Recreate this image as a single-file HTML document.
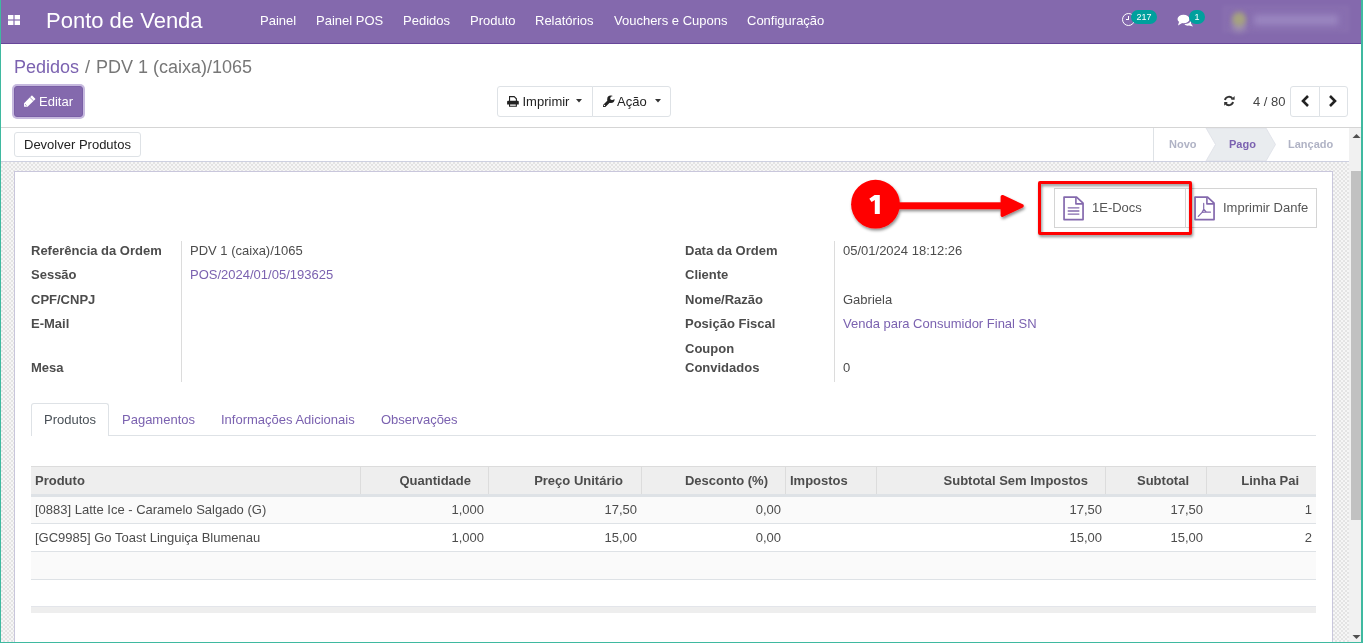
<!DOCTYPE html>
<html><head><meta charset="utf-8">
<style>
*{box-sizing:border-box;margin:0;padding:0}
html,body{width:1363px;height:643px;overflow:hidden;background:#fff}
body{-webkit-font-smoothing:antialiased}
#root{position:absolute;left:0;top:0;width:1363px;height:643px;will-change:transform}
body{font-family:"Liberation Sans",sans-serif;font-size:13px;color:#4c4c4c;position:relative;line-height:13px}
.a{position:absolute;white-space:nowrap}
#frameL{left:0;top:0;width:1px;height:643px;background:#3fb9a0}
#frameR{left:1361px;top:0;width:2px;height:643px;background:#3fb9a0}
#frameB{left:0;top:642px;width:1363px;height:1px;background:#3fb9a0}
#nav{left:1px;top:0;width:1360px;height:44px;background:#8469ad;border-bottom:1px solid #67469a}
.navt{color:#fff;font-size:13px;top:14px}
#brand{left:46px;top:8px;font-size:22px;color:#fff;line-height:25px}
.badge{position:absolute;background:#00a09d;color:#fff;font-size:9px;border-radius:7px;height:14px;line-height:14px;text-align:center}
#cp{left:1px;top:44px;width:1360px;height:84px;background:#fff;border-bottom:1px solid #d5d5d5}
.bc{top:57px;font-size:18px;color:#777;line-height:20px}
.btn{position:absolute;border:1px solid #dee2e6;background:#fff;color:#333}
#sb{left:1px;top:128px;width:1348px;height:34px;background:#fff;border-bottom:1px solid #cdd0e0}
#bg{left:1px;top:162px;width:1348px;height:480px;background:repeating-conic-gradient(#e4e4e4 0 25%,#f6f6f6 0 50%) 0 2px/4px 4px}
#sheet{left:14px;top:171px;width:1319px;height:480px;background:#fff;border:1px solid #c9c7dc}
#scroll{left:1349px;top:128px;width:12px;height:514px;background:#f1f1f1}
#thumb{left:1351px;top:171px;width:10px;height:349px;background:#c1c1c1}
.lbl{font-weight:bold;color:#4c4c4c}
.val{color:#4c4c4c}
.lnk{color:#7b62b0}
.st{font-size:11px;font-weight:bold;color:#b0b3c5;top:138px;line-height:13px}
.th{font-weight:bold;color:#4c4c4c;top:474px}
.td{top:503px}
.td2{top:531px}
.r{text-align:right}
</style></head><body><div id="root">
<div class="a" id="nav"></div>
<div class="a" style="left:8px;top:15px;width:12px;height:10px;background:#fff"></div>
<div class="a" style="left:13px;top:14px;width:2px;height:12px;background:rgba(132,105,173,.6)"></div>
<div class="a" style="left:7px;top:19px;width:14px;height:1.6px;background:rgba(132,105,173,.6)"></div>
<div class="a" id="brand">Ponto de Venda</div>
<div class="a navt" style="left:260px">Painel</div>
<div class="a navt" style="left:316px">Painel POS</div>
<div class="a navt" style="left:403px">Pedidos</div>
<div class="a navt" style="left:470px">Produto</div>
<div class="a navt" style="left:535px">Relatórios</div>
<div class="a navt" style="left:614px">Vouchers e Cupons</div>
<div class="a navt" style="left:747px">Configuração</div>
<!-- clock -->
<div class="a" style="left:1121.5px;top:13px;width:13px;height:13px;border:1.8px solid #fff;border-radius:50%"></div>
<div class="a" style="left:1128px;top:16px;width:1px;height:4px;background:#fff"></div>
<div class="a" style="left:1126px;top:19px;width:3px;height:1px;background:#fff"></div>
<div class="badge" style="left:1131px;top:10px;width:26px">217</div>
<!-- chat -->
<svg class="a" style="left:1176.5px;top:13.5px" width="17" height="14" viewBox="0 0 17 14">
 <ellipse cx="6.5" cy="5" rx="6" ry="4.3" fill="#fff"/>
 <path d="M2 8 L1 11.5 L6 8.5 Z" fill="#fff"/>
 <path d="M8 10 Q12 10 14 7 L14 9.5 L16 12.5 L12 11.5 Q9 12 7.5 10.5 Z" fill="#fff"/>
</svg>
<div class="badge" style="left:1189px;top:10px;width:16px">1</div>
<!-- blurred user -->
<div class="a" style="left:1222px;top:5px;width:128px;height:28px;background:rgba(255,255,255,.04);filter:blur(2px)"></div>
<div class="a" style="left:1232px;top:20px;width:14px;height:12px;border-radius:50%;background:#9f90b0;filter:blur(3px)"></div>
<div class="a" style="left:1232px;top:12px;width:14px;height:14px;border-radius:50%;background:#a6a37f;filter:blur(2.5px)"></div>
<div class="a" style="left:1254px;top:15px;width:84px;height:10px;background:#9a86c0;filter:blur(3px)"></div>

<div class="a" id="cp"></div>
<div class="a bc" style="left:14px;color:#7b62b0">Pedidos</div>
<div class="a bc" style="left:85px">/</div>
<div class="a bc" style="left:96px">PDV 1 (caixa)/1065</div>
<!-- Editar -->
<div class="a" style="left:12px;top:84px;width:73px;height:35px;border-radius:5px;background:#c6b9de"></div>
<div class="a" style="left:14px;top:86px;width:69px;height:31px;border-radius:3px;background:#8469ad;border:1px solid #7a5fa6"></div>
<svg class="a" style="left:23px;top:95px" width="14" height="14" viewBox="0 0 14 14"><path d="M1.06 8.2 L8.7 0.56 Q8.9 0.36 9.1 0.56 L12.3 3.75 Q12.5 3.95 12.3 4.15 L4.56 11.85 H1.06 Z" fill="#fff"/><path d="M6.93 2.33 L10.5 5.9" stroke="#8469ad" stroke-width="0.7"/><path d="M2.2 9.4 L3.5 10.7" stroke="#8469ad" stroke-width="0.9"/></svg>
<div class="a" style="left:39px;top:95px;color:#fff">Editar</div>
<!-- Imprimir / Acao -->
<div class="btn" style="left:497px;top:86px;width:96px;height:31px;border-radius:3px 0 0 3px"></div>
<div class="btn" style="left:592px;top:86px;width:79px;height:31px;border-radius:0 3px 3px 0"></div>
<svg class="a" style="left:503px;top:92px" width="18" height="18" viewBox="0 0 18 18"><path d="M6.55 9 V4.6 H11.2 L13.4 6.8 V9" stroke="#222" stroke-width="1.1" fill="none"/><path d="M4.1 9.8 Q4.1 8.7 5.2 8.7 H14.7 Q15.8 8.7 15.8 9.8 V12.6 H4.1 Z" fill="#222"/><path d="M6.55 12 V14.25 H13.35 V12" stroke="#222" stroke-width="1.1" fill="none"/></svg>
<div class="a" style="left:522.5px;top:95px;color:#222">Imprimir</div>
<svg class="a" style="left:576px;top:99px" width="6" height="4"><path d="M0 0 H6 L3 3.5 Z" fill="#333"/></svg>
<svg class="a" style="left:599px;top:92px" width="18" height="18" viewBox="0 0 18 18"><defs><mask id="wm"><rect width="18" height="18" fill="#fff"/><circle cx="13.2" cy="6.2" r="1.9" fill="#000"/><path d="M13.2 6.2 L13.6 2.5 L16.5 2.3 L17.5 6 L15.9 7.6 Z" fill="#000"/><circle cx="5.4" cy="13.4" r="0.7" fill="#000"/></mask></defs><g mask="url(#wm)" fill="#222"><circle cx="11.9" cy="7.3" r="3.7"/><path d="M9.8 9.4 L5.3 13.9" stroke="#222" stroke-width="3" stroke-linecap="round"/></g></svg>
<div class="a" style="left:617px;top:95px;color:#222">Ação</div>
<svg class="a" style="left:654.5px;top:99px" width="6" height="4"><path d="M0 0 H6 L3 3.5 Z" fill="#333"/></svg>
<!-- pager -->
<svg class="a" style="left:1220px;top:92px" width="18" height="18" viewBox="0 0 18 18"><path d="M4.94 7.91 A4.2 4.2 0 0 1 12.44 6.59" stroke="#333" stroke-width="1.9" fill="none"/><path d="M14.6 4.1 V7.75 H11 Z" fill="#333"/><path d="M13.06 10.09 A4.2 4.2 0 0 1 5.56 11.41" stroke="#333" stroke-width="1.9" fill="none"/><path d="M4.2 10.05 H7.8 L4.2 13.7 Z" fill="#333"/></svg>
<div class="a" style="left:1253px;top:95px;color:#444">4 / 80</div>
<div class="btn" style="left:1290px;top:86px;width:30px;height:31px;border-radius:3px 0 0 3px"></div>
<div class="btn" style="left:1319px;top:86px;width:29px;height:31px;border-radius:0 3px 3px 0"></div>
<svg class="a" style="left:1301px;top:95px" width="9" height="12" viewBox="0 0 9 12"><path d="M7 1 L2 6 L7 11" stroke="#222" stroke-width="2.6" fill="none"/></svg>
<svg class="a" style="left:1328px;top:95px" width="9" height="12" viewBox="0 0 9 12"><path d="M2 1 L7 6 L2 11" stroke="#222" stroke-width="2.6" fill="none"/></svg>

<!-- statusbar -->
<div class="a" id="sb"></div>
<div class="btn" style="left:14px;top:132px;width:127px;height:25px;border-radius:3px"></div>
<div class="a" style="left:24px;top:138px;color:#222">Devolver Produtos</div>
<div class="a" style="left:1153px;top:128px;width:1px;height:33px;background:#dee2e6"></div>
<svg class="a" style="left:1205px;top:128px" width="72" height="33"><path d="M1 0 H61 L70.5 16.5 L61 33 H1 L10.5 16.5 Z" fill="#e9ecef" stroke="#dde0e7" stroke-width="0.8"/></svg>
<div class="a st" style="left:1169px">Novo</div>
<div class="a st" style="left:1229px;color:#7b62b0">Pago</div>
<div class="a st" style="left:1288px">Lançado</div>

<div class="a" id="bg"></div>
<div class="a" id="sheet"></div>

<!-- button box -->
<div class="a" style="left:1054px;top:188px;width:263px;height:40px;border:1px solid #d4d4d4"></div>
<div class="a" style="left:1185px;top:188px;width:1px;height:40px;background:#d4d4d4"></div>
<svg class="a" style="left:1063px;top:196px" width="22" height="25" viewBox="0 0 22 25"><path d="M1.05 1.05 H13.6 L20.05 7.2 V23.55 H1.05 Z" stroke="#8469ad" stroke-width="1.7" fill="none" stroke-linejoin="round"/><path d="M12.9 1.05 V7.9 H20" stroke="#8469ad" stroke-width="1.6" fill="none" stroke-linejoin="round"/><path d="M5.2 11.8 H15.9 M5.2 15 H15.9 M5.2 18.1 H15.9" stroke="#8469ad" stroke-width="1.3" stroke-linecap="round"/></svg>
<div class="a" style="left:1092px;top:201px;color:#555">1E-Docs</div>
<svg class="a" style="left:1194px;top:196px" width="22" height="25" viewBox="0 0 22 25"><path d="M1.05 1.05 H13.6 L20.05 7.2 V23.55 H1.05 Z" stroke="#8469ad" stroke-width="1.7" fill="none" stroke-linejoin="round"/><path d="M12.9 1.05 V7.9 H20" stroke="#8469ad" stroke-width="1.6" fill="none" stroke-linejoin="round"/><path d="M9.7 7.4 V13.2 M9.7 13.2 L8.1 16.3 L12.2 15.9 Z M8.1 16.3 L4.3 20.4 M12.2 15.9 L16.4 16.2" stroke="#8469ad" stroke-width="1.2" fill="none" stroke-linecap="round" stroke-linejoin="round"/></svg>
<div class="a" style="left:1223px;top:201px;color:#555">Imprimir Danfe</div>

<!-- annotation -->
<div class="a" style="left:1037.5px;top:181px;width:154.5px;height:54px;border:3px solid #f00;border-radius:2px;filter:drop-shadow(1.5px 2px 1.5px rgba(0,0,0,.45))"></div>
<svg class="a" style="left:845px;top:175px" width="190" height="62" viewBox="0 0 190 62">
 <defs><filter id="sh" x="-20%" y="-20%" width="140%" height="150%"><feDropShadow dx="1" dy="2" stdDeviation="1.5" flood-color="#000" flood-opacity="0.45"/></filter></defs>
 <g filter="url(#sh)" fill="#f00">
  <circle cx="30.5" cy="29.2" r="24.4"/>
  <rect x="52" y="27.3" width="108" height="6.9"/>
  <path d="M157.3 21.6 L177 30.9 L157.3 40.2 Z" stroke="#f00" stroke-width="3.4" stroke-linejoin="round"/>
 </g>
 <path d="M29.6 20 H34.8 V38.9 H29.8 V25 L26.6 27 L24.3 23.7 Z" fill="#fff"/>
</svg>

<!-- fields left -->
<div class="a lbl" style="left:31px;top:244px">Referência da Ordem</div>
<div class="a lbl" style="left:31px;top:268px">Sessão</div>
<div class="a lbl" style="left:31px;top:293px">CPF/CNPJ</div>
<div class="a lbl" style="left:31px;top:317px">E-Mail</div>
<div class="a lbl" style="left:31px;top:361px">Mesa</div>
<div class="a" style="left:181px;top:241px;width:1px;height:141px;background:#dcdcdc"></div>
<div class="a val" style="left:190px;top:244px">PDV 1 (caixa)/1065</div>
<div class="a lnk" style="left:190px;top:268px">POS/2024/01/05/193625</div>
<!-- fields right -->
<div class="a lbl" style="left:685px;top:244px">Data da Ordem</div>
<div class="a lbl" style="left:685px;top:268px">Cliente</div>
<div class="a lbl" style="left:685px;top:293px">Nome/Razão</div>
<div class="a lbl" style="left:685px;top:317px">Posição Fiscal</div>
<div class="a lbl" style="left:685px;top:342px">Coupon</div>
<div class="a lbl" style="left:685px;top:361px">Convidados</div>
<div class="a" style="left:834px;top:241px;width:1px;height:141px;background:#dcdcdc"></div>
<div class="a val" style="left:843px;top:244px">05/01/2024 18:12:26</div>
<div class="a val" style="left:843px;top:293px">Gabriela</div>
<div class="a lnk" style="left:843px;top:317px">Venda para Consumidor Final SN</div>
<div class="a val" style="left:843px;top:361px">0</div>

<!-- tabs -->
<div class="a" style="left:31px;top:435px;width:1285px;height:1px;background:#dee2e6"></div>
<div class="a" style="left:31px;top:403px;width:78px;height:33px;background:#fff;border:1px solid #dee2e6;border-bottom:none;border-radius:3px 3px 0 0"></div>
<div class="a" style="left:44px;top:413px;color:#495057">Produtos</div>
<div class="a lnk" style="left:122px;top:413px">Pagamentos</div>
<div class="a lnk" style="left:221px;top:413px">Informações Adicionais</div>
<div class="a lnk" style="left:381px;top:413px">Observações</div>

<!-- table -->
<div class="a" style="left:31px;top:466px;width:1285px;height:28px;background:#eee;border-top:1px solid #dcdcdc"></div>
<div class="a" style="left:31px;top:494px;width:1285px;height:3px;background:#dee2e6"></div>
<div class="a" style="left:31px;top:497px;width:1285px;height:27px;background:#fafafa;border-bottom:1px solid #dee2e6"></div>
<div class="a" style="left:31px;top:524px;width:1285px;height:28px;background:#fff;border-bottom:1px solid #dee2e6"></div>
<div class="a" style="left:31px;top:552px;width:1285px;height:28px;background:#fafafa;border-bottom:1px solid #dee2e6"></div>
<div class="a" style="left:31px;top:606px;width:1285px;height:7px;background:#eee;border-top:1px solid #e3e5ea"></div>
<div class="a" style="left:360px;top:467px;width:1px;height:27px;background:#dcdcdc"></div>
<div class="a" style="left:488px;top:467px;width:1px;height:27px;background:#dcdcdc"></div>
<div class="a" style="left:641px;top:467px;width:1px;height:27px;background:#dcdcdc"></div>
<div class="a" style="left:785px;top:467px;width:1px;height:27px;background:#dcdcdc"></div>
<div class="a" style="left:876px;top:467px;width:1px;height:27px;background:#dcdcdc"></div>
<div class="a" style="left:1105px;top:467px;width:1px;height:27px;background:#dcdcdc"></div>
<div class="a" style="left:1206px;top:467px;width:1px;height:27px;background:#dcdcdc"></div>

<div class="a th" style="left:35px">Produto</div>
<div class="a th r" style="left:371px;width:100px">Quantidade</div>
<div class="a th r" style="left:500px;width:123px">Preço Unitário</div>
<div class="a th r" style="left:650px;width:118px">Desconto (%)</div>
<div class="a th" style="left:790px">Impostos</div>
<div class="a th r" style="left:900px;width:188px">Subtotal Sem Impostos</div>
<div class="a th r" style="left:1110px;width:79px">Subtotal</div>
<div class="a th r" style="left:1210px;width:89px">Linha Pai</div>

<div class="a td" style="left:35px">[0883] Latte Ice - Caramelo Salgado (G)</div>
<div class="a td r" style="left:384px;width:100px">1,000</div>
<div class="a td r" style="left:537px;width:100px">17,50</div>
<div class="a td r" style="left:681px;width:100px">0,00</div>
<div class="a td r" style="left:1002px;width:100px">17,50</div>
<div class="a td r" style="left:1103px;width:100px">17,50</div>
<div class="a td r" style="left:1212px;width:100px">1</div>

<div class="a td2" style="left:35px">[GC9985] Go Toast Linguiça Blumenau</div>
<div class="a td2 r" style="left:384px;width:100px">1,000</div>
<div class="a td2 r" style="left:537px;width:100px">15,00</div>
<div class="a td2 r" style="left:681px;width:100px">0,00</div>
<div class="a td2 r" style="left:1002px;width:100px">15,00</div>
<div class="a td2 r" style="left:1103px;width:100px">15,00</div>
<div class="a td2 r" style="left:1212px;width:100px">2</div>

<div class="a" id="scroll"></div>
<div class="a" id="thumb"></div>
<svg class="a" style="left:1351px;top:133px" width="10" height="6"><path d="M1.5 5 L5.5 1 L9.5 5 Z" fill="#505050"/></svg>
<svg class="a" style="left:1351px;top:634px" width="10" height="6"><path d="M1.5 1 L5.5 5 L9.5 1 Z" fill="#505050"/></svg>

<div class="a" id="frameL"></div>
<div class="a" id="frameR"></div>
<div class="a" id="frameB"></div>
</div></body></html>
